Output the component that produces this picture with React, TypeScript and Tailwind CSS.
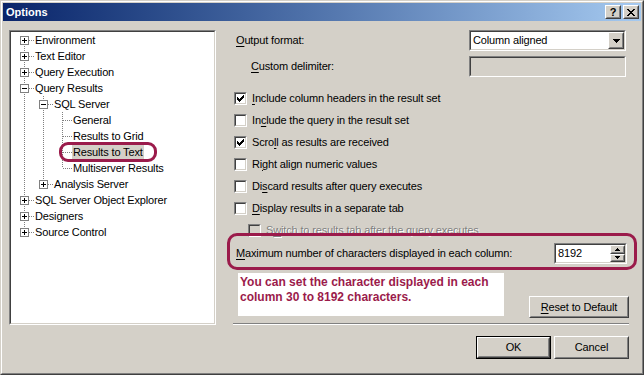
import React from 'react';

const RED = 'border-[#9b1b4b]';

function Accel({ text, at }: { text: string; at: number }) {
  return (
    <>
      {text.slice(0, at)}
      <span className="underline underline-offset-[2px]">{text[at]}</span>
      {text.slice(at + 1)}
    </>
  );
}

function Sunken({ className = '', inner = '', children }: { className?: string; inner?: string; children?: React.ReactNode }) {
  return (
    <div className={`border border-t-[#808080] border-l-[#808080] border-r-white border-b-white ${className}`}>
      <div className={`h-full w-full border border-t-[#404040] border-l-[#404040] border-r-[#d4d0c8] border-b-[#d4d0c8] ${inner}`}>
        {children}
      </div>
    </div>
  );
}

function Raised({ className = '', children }: { className?: string; children?: React.ReactNode }) {
  return (
    <div className={`border border-t-white border-l-white border-r-[#404040] border-b-[#404040] ${className}`}>
      <div className="h-full w-full border border-t-[#d4d0c8] border-l-[#d4d0c8] border-r-[#808080] border-b-[#808080] bg-[#d4d0c8] flex items-center justify-center">
        {children}
      </div>
    </div>
  );
}

function CheckBox({ checked, disabled }: { checked?: boolean; disabled?: boolean }) {
  const starts = [2, 3, 4, 3, 2, 1, 0];
  return (
    <Sunken className="w-[13px] h-[13px] shrink-0" inner={disabled ? 'bg-[#d4d0c8]' : 'bg-white'}>
      {checked && (
        <svg width="9" height="9" viewBox="0 0 9 9" shapeRendering="crispEdges">
          <path d={starts.map((s, c) => `M${c + 1} ${s + 1}h1v3h-1z`).join(' ')} fill="#000" />
        </svg>
      )}
    </Sunken>
  );
}

const DownArrow = () => (
  <svg width="7" height="4" viewBox="0 0 7 4" shapeRendering="crispEdges">
    <path d="M0 0h7v1h-7z M1 1h5v1h-5z M2 2h3v1h-3z M3 3h1v1h-1z" fill="#000" />
  </svg>
);

type TreeNode = { label: string; level: number; exp?: '+' | '-'; guides: boolean[]; first?: boolean; last?: boolean; sel?: boolean };

const tree: TreeNode[] = [
  { label: 'Environment', level: 0, exp: '+', guides: [], first: true },
  { label: 'Text Editor', level: 0, exp: '+', guides: [] },
  { label: 'Query Execution', level: 0, exp: '+', guides: [] },
  { label: 'Query Results', level: 0, exp: '-', guides: [] },
  { label: 'SQL Server', level: 1, exp: '-', guides: [true] },
  { label: 'General', level: 2, guides: [true, true] },
  { label: 'Results to Grid', level: 2, guides: [true, true] },
  { label: 'Results to Text', level: 2, guides: [true, true], sel: true },
  { label: 'Multiserver Results', level: 2, guides: [true, true], last: true },
  { label: 'Analysis Server', level: 1, exp: '+', guides: [true], last: true },
  { label: 'SQL Server Object Explorer', level: 0, exp: '+', guides: [] },
  { label: 'Designers', level: 0, exp: '+', guides: [] },
  { label: 'Source Control', level: 0, exp: '+', guides: [], last: true },
];

function TreeRow({ n }: { n: TreeNode }) {
  return (
    <div className="h-[16px] flex items-center">
      {n.guides.map((g, i) => (
        <svg key={i} width="19" height="16" className="shrink-0" shapeRendering="crispEdges">
          {g && <line x1="9.5" y1="0" x2="9.5" y2="16" stroke="#808080" strokeDasharray="1 1" />}
        </svg>
      ))}
      <svg width="19" height="16" className="shrink-0" shapeRendering="crispEdges">
        {!n.first && <line x1="9.5" y1="0" x2="9.5" y2="8" stroke="#808080" strokeDasharray="1 1" />}
        {!n.last && <line x1="9.5" y1="8" x2="9.5" y2="16" stroke="#808080" strokeDasharray="1 1" />}
        <line x1="10" y1="8.5" x2="19" y2="8.5" stroke="#808080" strokeDasharray="1 1" />
        {n.exp && (
          <g>
            <rect x="5.5" y="4.5" width="8" height="8" fill="#fff" stroke="#808080" />
            <path d="M7 8h5v1h-5z" fill="#000" />
            {n.exp === '+' && <path d="M9 6h1v5h-1z" fill="#000" />}
          </g>
        )}
      </svg>
      <span className={`px-px leading-[14px] whitespace-nowrap ${n.sel ? 'bg-[#d4d0c8]' : ''}`}>{n.label}</span>
    </div>
  );
}

const checks: { text: string; at: number; checked?: boolean; disabled?: boolean }[] = [
  { text: 'Include column headers in the result set', at: 0, checked: true },
  { text: 'Include the query in the result set', at: 2 },
  { text: 'Scroll as results are received', at: 4, checked: true },
  { text: 'Right align numeric values', at: 2 },
  { text: 'Discard results after query executes', at: 2 },
  { text: 'Display results in a separate tab', at: 0 },
  { text: 'Switch to results tab after the query executes', at: 1, disabled: true },
];

export default function App() {
  return (
    <div className="w-[644px] h-[375px] border border-t-[#d4d0c8] border-l-[#d4d0c8] border-r-[#404040] border-b-[#404040] bg-[#d4d0c8] font-['Liberation_Sans',Arial,sans-serif] text-[11px] tracking-[-0.15px] text-black overflow-hidden">
      <div className="h-full border border-t-white border-l-white border-r-[#808080] border-b-[#808080] p-px flex flex-col">
        {/* Title bar */}
        <div className="h-[18px] shrink-0 bg-linear-to-r from-[#0a246a] to-[#a6caf0] flex items-center pl-[3px] pr-[2px]">
          <span className="flex-1 font-bold text-white tracking-normal">Options</span>
          <Raised className="w-[16px] h-[14px]">
            <span className="font-bold text-[11px] leading-none tracking-normal">?</span>
          </Raised>
          <Raised className="w-[16px] h-[14px] ml-[2px]">
            <svg width="8" height="7" viewBox="0 0 8 7" shapeRendering="crispEdges">
              <path
                d="M0 0h2v1h-2z M6 0h2v1h-2z M1 1h2v1h-2z M5 1h2v1h-2z M2 2h4v1h-4z M3 3h2v1h-2z M2 4h4v1h-4z M1 5h2v1h-2z M5 5h2v1h-2z M0 6h2v1h-2z M6 6h2v1h-2z"
                fill="#000"
              />
            </svg>
          </Raised>
        </div>

        <div className="flex flex-1">
          {/* Tree */}
          <Sunken className="ml-[6px] mt-[9px] w-[207px] h-[295px] shrink-0" inner="bg-white relative pl-[4px]">
            {tree.map((n) => (
              <TreeRow key={n.label} n={n} />
            ))}
            <div className={`absolute left-[48px] top-[110px] w-[98px] h-[20px] border-[3px] ${RED} rounded-[9px] pointer-events-none`} />
          </Sunken>

          {/* Right panel */}
          <div className="ml-[12px] w-[408px] relative flex flex-col">
            <div className="mt-[9px] h-[21px] flex items-center justify-between pr-[10px]">
              <span className="pl-[8px]">
                <Accel text="Output format:" at={0} />
              </span>
              <Sunken className="w-[157px] h-[21px]" inner="bg-white flex items-center">
                <span className="flex-1 pl-[2px]">Column aligned</span>
                <Raised className="w-[16px] h-[17px]">
                  <DownArrow />
                </Raised>
              </Sunken>
            </div>
            <div className="mt-[5px] h-[21px] flex items-center justify-between pr-[10px]">
              <span className="pl-[23px]">
                <Accel text="Custom delimiter:" at={0} />
              </span>
              <Sunken className="w-[157px] h-[21px]" inner="bg-[#d4d0c8]" />
            </div>

            <div className="mt-[10px] flex flex-col">
              {checks.map((c) => (
                <div key={c.text} className={`h-[22px] flex items-center ${c.disabled ? 'pl-[20px]' : 'pl-[6px]'}`}>
                  <CheckBox checked={c.checked} disabled={c.disabled} />
                  <span className={`ml-[5px] whitespace-nowrap ${c.disabled ? 'text-[#808080] [text-shadow:1px_1px_0_#fff]' : ''}`}>
                    <Accel text={c.text} at={c.at} />
                  </span>
                </div>
              ))}
            </div>

            <div className="mt-[2px] h-[21px] flex items-center justify-between pr-[9px]">
              <span className="pl-[8px] whitespace-nowrap">
                <Accel text="Maximum number of characters displayed in each column:" at={0} />
              </span>
              <Sunken className="w-[73px] h-[21px]" inner="bg-white flex items-center">
                <span className="flex-1 pl-[2px]">8192</span>
                <div className="w-[15px] h-full flex flex-col">
                  <Raised className="flex-1">
                    <svg width="5" height="3" viewBox="0 0 5 3" shapeRendering="crispEdges">
                      <path d="M2 0h1v1h-1z M1 1h3v1h-3z M0 2h5v1h-5z" fill="#000" />
                    </svg>
                  </Raised>
                  <Raised className="flex-1">
                    <svg width="5" height="3" viewBox="0 0 5 3" shapeRendering="crispEdges">
                      <path d="M0 0h5v1h-5z M1 1h3v1h-3z M2 2h1v1h-1z" fill="#000" />
                    </svg>
                  </Raised>
                </div>
              </Sunken>
            </div>

            <div className="mt-[9px] flex items-end pr-[7px]">
              <div className="ml-[10px] w-[266px] h-[43px] bg-white pl-[2px] pt-[2px] text-[12px] leading-[15px] font-bold tracking-normal text-[#9b1b4b]">
                You can set the character displayed in each column 30 to 8192 characters.
              </div>
              <div className="flex-1" />
              <Raised className="w-[100px] h-[22px] -mb-[2px]">
                <Accel text="Reset to Default" at={0} />
              </Raised>
            </div>

            <div className="mt-[7px] ml-[5px] mr-[7px] border-t border-t-[#808080] border-b border-b-white" />

            <div className="mt-[11px] flex justify-end gap-[3px] pr-[7px]">
              <div className="w-[75px] h-[23px] border border-black">
                <Raised className="w-full h-full">OK</Raised>
              </div>
              <Raised className="w-[75px] h-[23px]">Cancel</Raised>
            </div>

            <div className={`absolute left-[-1px] top-[212px] w-[410px] h-[37px] border-[3px] ${RED} rounded-[10px] pointer-events-none`} />
          </div>
        </div>
      </div>
    </div>
  );
}
